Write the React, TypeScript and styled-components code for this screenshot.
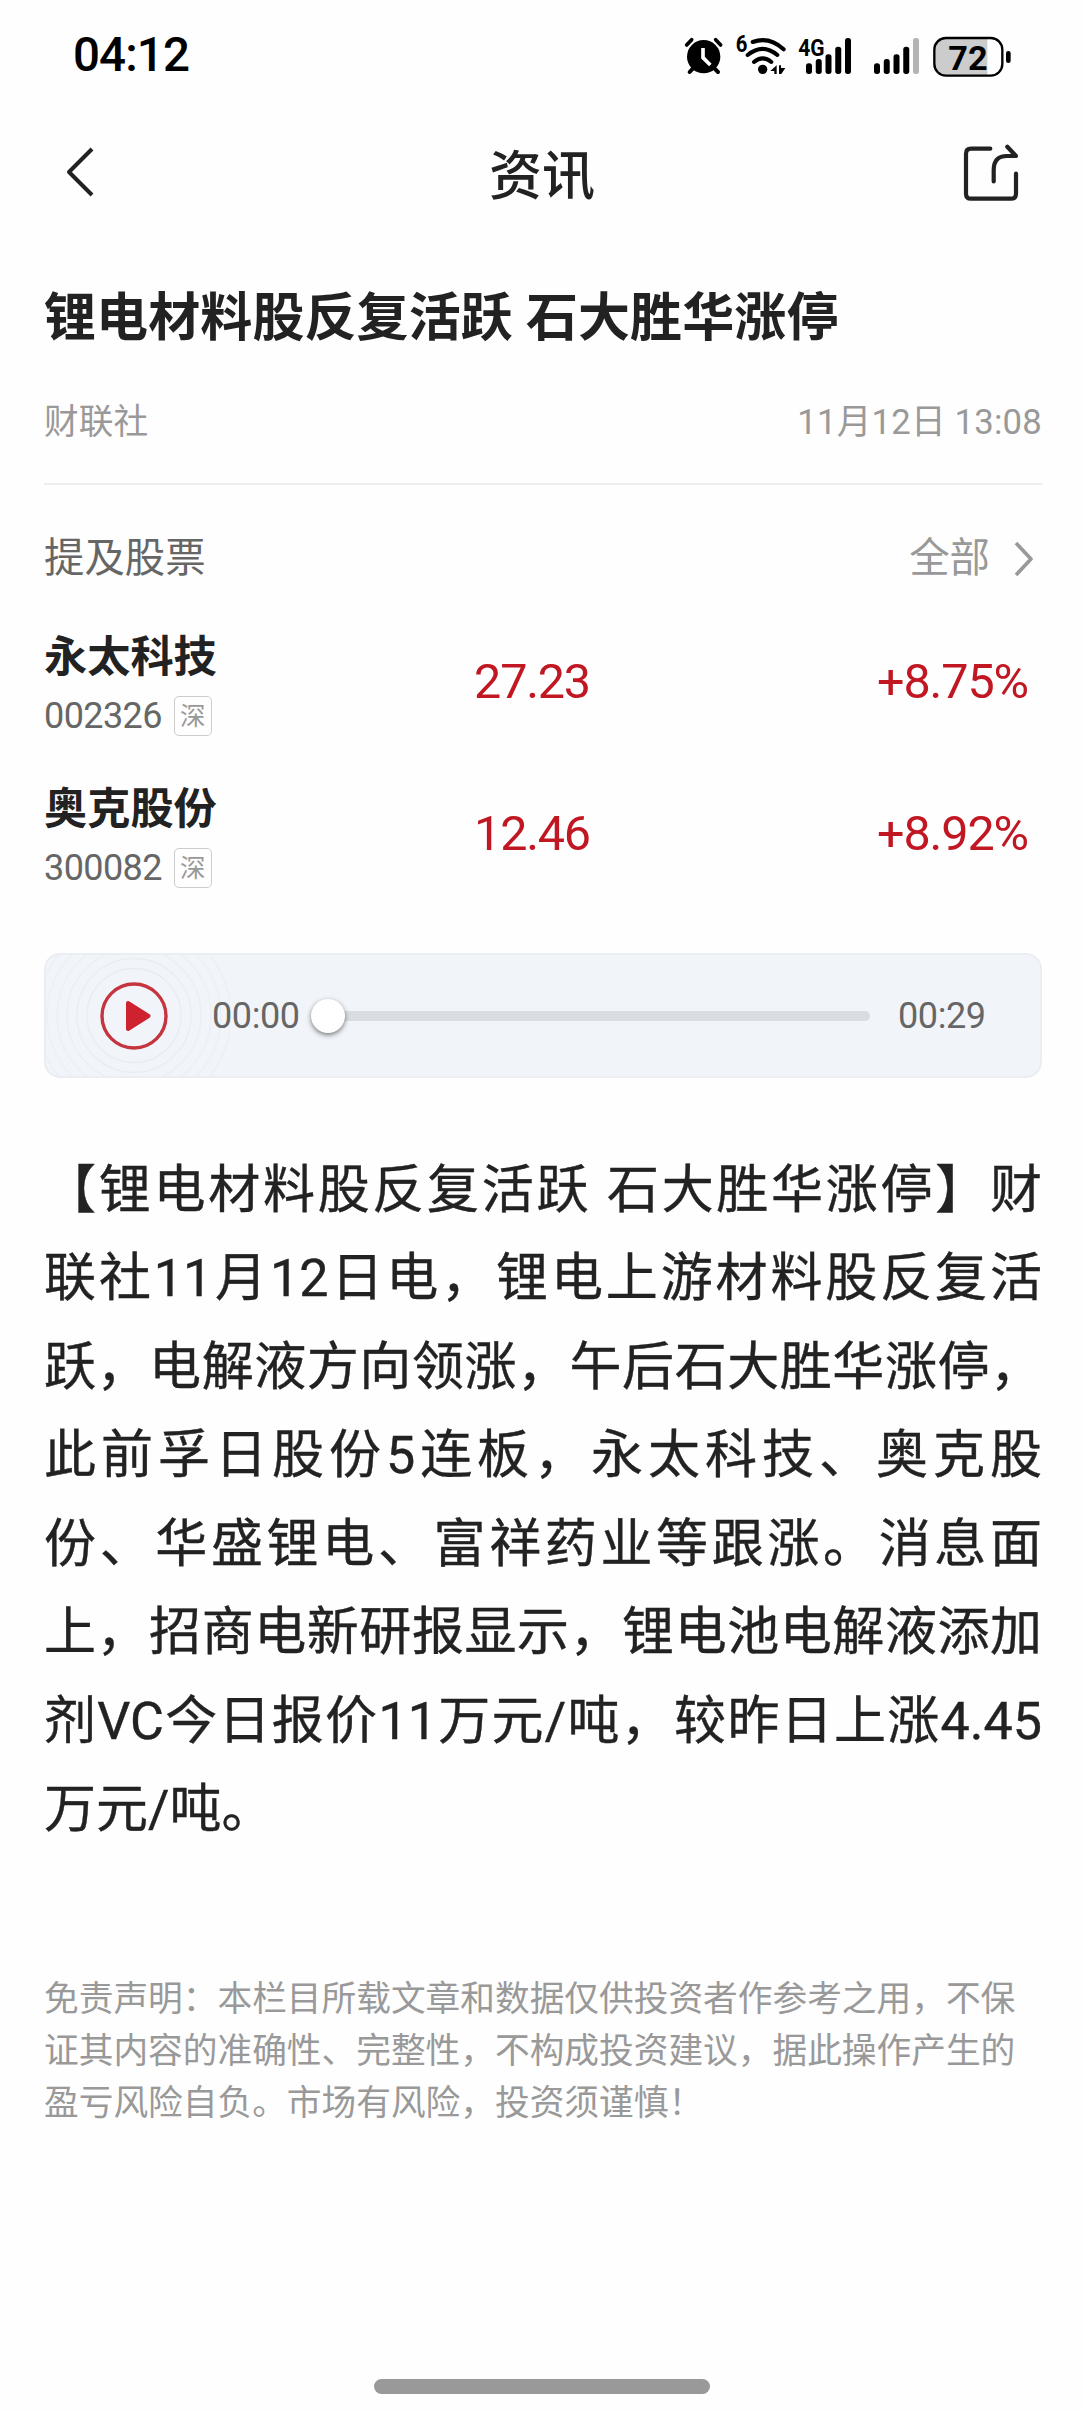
import React from 'react';
import styled, { createGlobalStyle } from 'styled-components';

const GlobalStyle = createGlobalStyle`
  * { box-sizing: border-box; }
  body {
    margin: 0;
    background: #fefefe;
    color: #222;
    font-family: Roboto, "Noto Sans CJK SC", sans-serif;
    text-spacing-trim: space-all;
  }
`;

const Screen = styled.div`
  width: 1084px;
  height: 2412px;
  display: flex;
  flex-direction: column;
  overflow: hidden;
`;

const StatusBar = styled.header`
  height: 110px;
  padding: 0 72px 0 73px;
  display: flex;
  align-items: center;
  justify-content: space-between;
`;

const Clock = styled.time`
  font-size: 47.5px;
  font-weight: 500;
  line-height: 60px;
  letter-spacing: -0.9px;
  color: #000;
`;

const StatusIcons = styled.div`
  display: flex;
  height: 80px;
  margin-top: 10px;
`;

const NavBar = styled.nav`
  height: 124px;
  padding: 0 64px;
  display: grid;
  grid-template-columns: 60px 1fr 60px;
  align-items: center;
`;

const NavTitle = styled.h1`
  margin: 9px 0 0;
  font-size: 53px;
  font-weight: 500;
  line-height: 72px;
  text-align: center;
`;

const IconButton = styled.button<{ $end?: boolean }>`
  padding: 0;
  border: 0;
  background: none;
  display: flex;
  justify-content: ${(p) => (p.$end ? 'flex-end' : 'flex-start')};
`;

const Article = styled.main`
  padding: 2px 42px 0 44px;
`;

const Headline = styled.h2`
  margin: 0;
  height: 166px;
  line-height: 166px;
  font-size: 52px;
  font-weight: 700;
  letter-spacing: 0.1px;
  white-space: nowrap;
`;

const Meta = styled.div`
  height: 83px;
  padding-bottom: 41px;
  border-bottom: 2px solid #eee;
  display: flex;
  align-items: center;
  justify-content: space-between;
  font-size: 34.7px;
  line-height: 42px;
  color: #999;
`;

const MetaDate = styled.time`
  letter-spacing: 0.2px;
`;

const SectionHead = styled.div`
  margin-top: 46px;
  height: 56px;
  display: flex;
  align-items: center;
  justify-content: space-between;
  font-size: 40.4px;
  line-height: 56px;
  color: #666;
`;

const More = styled.a`
  display: flex;
  align-items: center;
  gap: 22px;
  padding-right: 6px;
  color: #999;
`;

const StockList = styled.div`
  padding-top: 19px;
`;

const StockRow = styled.div`
  height: 152px;
  padding-right: 14px;
  display: grid;
  grid-template-columns: 300px 1fr 308px;
  align-items: center;
`;

const StockName = styled.div`
  font-size: 43.2px;
  font-weight: 700;
  line-height: 60px;
`;

const StockCode = styled.div`
  display: flex;
  align-items: center;
  gap: 12px;
  font-size: 36px;
  line-height: 40px;
  letter-spacing: -0.6px;
  margin-top: 8px;
  color: #666;
`;

const Market = styled.span`
  width: 38px;
  height: 40px;
  border: 1.5px solid #ccc;
  border-radius: 5px;
  font-size: 25.5px;
  line-height: 38px;
  letter-spacing: 0;
  text-align: center;
  color: #999;
`;

const Quote = styled.div<{ $end?: boolean }>`
  font-size: 48.5px;
  line-height: 60px;
  letter-spacing: ${(p) => (p.$end ? '-1.1px' : '-1.2px')};
  text-align: ${(p) => (p.$end ? 'right' : 'center')};
  color: #c01722;
`;

const Player = styled.section`
  position: relative;
  height: 125px;
  margin-top: 43px;
  padding: 0 55px 0 54px;
  border: 2px solid #eaedf1;
  border-radius: 16px;
  background: #f1f5f9;
  display: flex;
  align-items: center;
  overflow: hidden;
`;

const Ripples = styled.svg`
  position: absolute;
  left: 0;
  top: 0;
`;

const PlayButton = styled.button`
  position: relative;
  padding: 0;
  border: 0;
  background: none;
  display: flex;
  margin-right: 44px;
`;

const Time = styled.span`
  position: relative;
  width: 87px;
  font-size: 36px;
  line-height: 44px;
  letter-spacing: -0.4px;
  color: #666;
  white-space: nowrap;
`;

const Slider = styled.div`
  flex: 1;
  height: 34px;
  margin: 0 28px 0 12px;
  display: flex;
  align-items: center;
`;

const Knob = styled.div`
  width: 34px;
  height: 34px;
  border-radius: 50%;
  background: #fff;
  box-shadow: 0 2px 5px rgba(0, 0, 0, 0.5);
  z-index: 1;
`;

const Track = styled.div`
  flex: 1;
  height: 10px;
  margin-left: -10px;
  border-radius: 5px;
  background: #d9dde2;
`;

const Body = styled.div`
  margin-top: 69px;
  font-size: 52px;
  line-height: 88.45px;
  -webkit-text-stroke: 0.4px #222;
`;

const BodyLine = styled.div<{ $last?: boolean }>`
  height: 88.45px;
  white-space: nowrap;
  text-align-last: ${(p) => (p.$last ? 'left' : 'justify')};
`;

const Disclaimer = styled.footer`
  margin-top: 118px;
  font-size: 34.7px;
  line-height: 52.1px;
  color: #999;
  white-space: nowrap;
`;

const HomeIndicator = styled.div`
  width: 336px;
  height: 15px;
  margin: auto auto 18px 374px;
  border-radius: 8px;
  background: #999;
  flex-shrink: 0;
`;

const AlarmIcon = () => (
  <svg width="48" height="80" viewBox="60 0 144 240">
    <circle cx="131" cy="110" r="50" />
    <g stroke="#000" strokeWidth="11" strokeLinecap="round" fill="none">
      <path d="M80 75 L95 59 M167 59 L182 75" />
      <path d="M101 143 L89 156 M161 143 L174 156" strokeWidth="12" />
    </g>
    <path d="M129 84 V113 L151 135" fill="none" stroke="#fff" strokeWidth="11" />
  </svg>
);

const WifiIcon = () => (
  <svg width="64" height="80" viewBox="204 0 192 240">
    <text x="227" y="97" fontSize="71" fontWeight="700" textLength="35" lengthAdjust="spacingAndGlyphs">6</text>
    <g stroke="#000" strokeWidth="12" strokeLinecap="round" fill="none">
      <path d="M278 66 Q328 48 371 88" />
      <path d="M263 105 Q308 68 352 105" />
      <path d="M282 126 Q308 104 334 126" />
    </g>
    <circle cx="308" cy="148" r="14" />
    <path d="M331 153 L350 136 V162 H343 V153 Z M357 136 H363 V144 H376 L364 162 H357 Z" />
  </svg>
);

const bars = [130, 117, 103, 80, 54];

const SignalIcon = ({ width, left, first, label, dimLast }: { width: number; left: number; first: number; label?: string; dimLast?: boolean }) => (
  <svg width={width} height="80" viewBox={`${left} 0 ${width * 3} 240`}>
    {label && (
      <text x={first - 32} y="107" fontSize="71" fontWeight="700" textLength="79" lengthAdjust="spacingAndGlyphs">
        {label}
      </text>
    )}
    {bars.map((top, i) => (
      <rect key={top} x={first - 9 + i * 29.25} y={top} width="18" height={162 - top} rx="8" fill={dimLast && i === 4 ? '#b3b3b3' : '#000'} />
    ))}
  </svg>
);

const BatteryIcon = () => (
  <svg width="87" height="80" viewBox="795 0 261 240">
    <path d="M982 55 H858 A34 34 0 0 0 824 89 V133 A34 34 0 0 0 858 167 H982 Z" fill="#ccc" />
    <rect x="823" y="54" width="204" height="113" rx="35" fill="none" stroke="#000" strokeWidth="7" />
    <rect x="1038" y="93" width="14" height="36" rx="7" />
    <text x="865" y="149" fontSize="102" fontWeight="700" textLength="118" lengthAdjust="spacingAndGlyphs">72</text>
  </svg>
);

const BackIcon = () => (
  <svg width="32" height="52" viewBox="0 0 32 52" fill="none" stroke="#222" strokeWidth="4" strokeLinejoin="round">
    <path d="M28 3 L5 26 L28 49" />
  </svg>
);

const ShareIcon = () => (
  <svg width="60" height="60" viewBox="0 0 60 60" fill="none" stroke="#222" strokeWidth="4.2" strokeLinecap="round" strokeLinejoin="round">
    <path d="M30.3 6.7 H11 Q6 6.7 6 11.7 V51.7 Q6 56.7 11 56.7 H51 Q56 56.7 56 51.7 V31.5" />
    <path d="M33.7 39.5 V28 Q33.7 14 47 14 H56 L47.3 4.7" />
  </svg>
);

const ChevronIcon = () => (
  <svg width="24" height="40" viewBox="0 0 24 40" fill="none" stroke="#999" strokeWidth="3.6" strokeLinejoin="round">
    <path d="M4 4 L19 20 L4 36" />
  </svg>
);

const PlayIcon = () => (
  <svg width="68" height="68" viewBox="0 0 68 68">
    <circle cx="34" cy="34" r="32" fill="none" stroke="#c5353f" strokeWidth="3.4" />
    <path d="M28 21 L48.5 34 L28 47 Z" fill="#cf2230" stroke="#cf2230" strokeWidth="4" strokeLinejoin="round" />
  </svg>
);

const stocks = [
  { name: '永太科技', code: '002326', price: '27.23', change: '+8.75%' },
  { name: '奥克股份', code: '300082', price: '12.46', change: '+8.92%' },
];

const bodyLines = [
  '【锂电材料股反复活跃 石大胜华涨停】财',
  '联社11月12日电，锂电上游材料股反复活',
  '跃，电解液方向领涨，午后石大胜华涨停，',
  '此前孚日股份5连板，永太科技、奥克股',
  '份、华盛锂电、富祥药业等跟涨。消息面',
  '上，招商电新研报显示，锂电池电解液添加',
  '剂VC今日报价11万元/吨，较昨日上涨4.45',
  '万元/吨。',
];

const disclaimerLines = [
  '免责声明：本栏目所载文章和数据仅供投资者作参考之用，不保',
  '证其内容的准确性、完整性，不构成投资建议，据此操作产生的',
  '盈亏风险自负。市场有风险，投资须谨慎！',
];

export default function App() {
  return (
    <Screen>
      <GlobalStyle />
      <StatusBar>
        <Clock>04:12</Clock>
        <StatusIcons>
          <AlarmIcon />
          <WifiIcon />
          <SignalIcon width={70} left={396} first={447} label="4G" />
          <SignalIcon width={63} left={606} first={651} dimLast />
          <BatteryIcon />
        </StatusIcons>
      </StatusBar>
      <NavBar>
        <IconButton aria-label="返回"><BackIcon /></IconButton>
        <NavTitle>资讯</NavTitle>
        <IconButton $end aria-label="分享"><ShareIcon /></IconButton>
      </NavBar>
      <Article>
        <Headline>锂电材料股反复活跃 石大胜华涨停</Headline>
        <Meta>
          <span>财联社</span>
          <MetaDate>11月12日 13:08</MetaDate>
        </Meta>
        <SectionHead>
          <span>提及股票</span>
          <More>全部<ChevronIcon /></More>
        </SectionHead>
        <StockList>
          {stocks.map((s) => (
            <StockRow key={s.code}>
              <div>
                <StockName>{s.name}</StockName>
                <StockCode>{s.code}<Market>深</Market></StockCode>
              </div>
              <Quote>{s.price}</Quote>
              <Quote $end>{s.change}</Quote>
            </StockRow>
          ))}
        </StockList>
        <Player>
          <Ripples width="184" height="121" fill="none" stroke="#e8ecf1" strokeWidth="1.3">
            {[47, 57, 67, 77, 87, 97].map((r, i) => (
              <circle key={r} cx="88" cy="60.5" r={r} opacity={1 - i * 0.1} />
            ))}
          </Ripples>
          <PlayButton aria-label="播放"><PlayIcon /></PlayButton>
          <Time>00:00</Time>
          <Slider>
            <Knob />
            <Track />
          </Slider>
          <Time>00:29</Time>
        </Player>
        <Body>
          {bodyLines.map((line, i) => (
            <BodyLine key={line} $last={i === bodyLines.length - 1}>{line}</BodyLine>
          ))}
        </Body>
        <Disclaimer>
          {disclaimerLines.map((line) => (
            <div key={line}>{line}</div>
          ))}
        </Disclaimer>
      </Article>
      <HomeIndicator />
    </Screen>
  );
}
